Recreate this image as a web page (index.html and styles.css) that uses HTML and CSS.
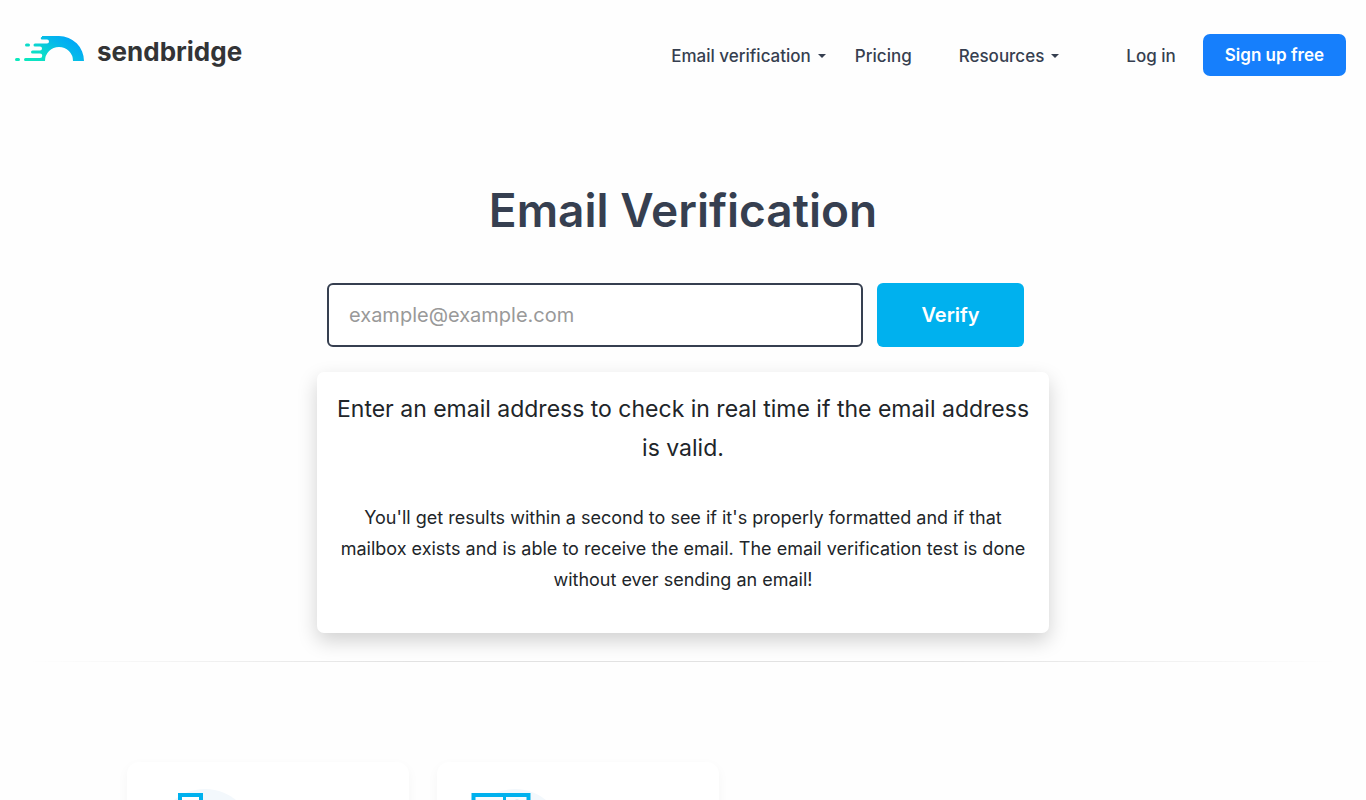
FILE: index.html
```
<!DOCTYPE html>
<html lang="en">
<head>
    <meta charset="UTF-8">
    <meta name="viewport" content="width=device-width, initial-scale=1.0">
    <title>Email Verification - Sendbridge</title>
    <link rel="stylesheet" href="styles.css">
</head>
<body>
    <header class="header">
        <a href="#" class="logo">
            <svg class="logo-mark" width="70" height="28" viewBox="0 0 70 28" aria-hidden="true">
                <defs>
                    <linearGradient id="bridge" x1="0" y1="1" x2="1" y2="0.4">
                        <stop offset="0" stop-color="#0be8bd"/>
                        <stop offset="0.35" stop-color="#0cdcca"/>
                        <stop offset="0.7" stop-color="#05b9ea"/>
                        <stop offset="1" stop-color="#00a6f8"/>
                    </linearGradient>
                </defs>
                <path fill="url(#bridge)" d="M27 1H44A25 25 0 0 1 69 26H58A14 14 0 0 0 30 26H10.500a1.500 1.500 0 0 1 0-3H25a2.200 2.200 0 0 0 0-4.500H17.500a1.500 1.500 0 0 1 0-3H25a2 2 0 0 0 0-4H20a1.500 1.500 0 0 1 0-3H32a2 2 0 0 0 0-4H27a1.200 1.200 0 0 1 0-2.500Z"/>
                <rect x="10" y="8.500" width="5" height="3" rx="1.500" fill="#0cdcca"/>
                <rect x="0" y="23" width="5" height="3" rx="1.500" fill="#0be8bd"/>
            </svg>
            <span class="logo-text">sendbridge</span>
        </a>
        <nav class="nav">
            <a href="#" class="nav-link dropdown">Email verification</a>
            <a href="#" class="nav-link pricing">Pricing</a>
            <a href="#" class="nav-link dropdown">Resources</a>
            <a href="#" class="nav-link login">Log in</a>
            <a href="#" class="signup">Sign up free</a>
        </nav>
    </header>

    <main>
        <section class="hero">
            <h1>Email Verification</h1>
            <form class="verify-form">
                <input type="email" class="email-input" placeholder="example@example.com" aria-label="Email address">
                <button type="submit" class="verify-btn">Verify</button>
            </form>
            <div class="info">
                <p class="lead">Enter an email address to check in real time if the email address is valid.</p>
                <p class="details">You'll get results within a second to see if it's properly formatted and if that mailbox exists and is able to receive the email. The email verification test is done without ever sending an email!</p>
            </div>
        </section>

        <hr class="divider">

        <section class="features">
            <div class="card">
                <svg width="98" height="98" viewBox="0 0 98 98" aria-hidden="true">
                    <circle cx="49" cy="49" r="49" fill="#f3f8fc"/>
                    <rect x="24" y="6" width="21" height="70" fill="#fff" stroke="#00b1ee" stroke-width="4"/>
                </svg>
            </div>
            <div class="card">
                <svg width="98" height="98" viewBox="0 0 98 98" aria-hidden="true">
                    <circle cx="49" cy="49" r="49" fill="#f3f8fc"/>
                    <rect x="7.500" y="6" width="55" height="70" fill="#f8fbfd" stroke="#00b1ee" stroke-width="4"/>
                    <path d="M38.500 6V76" stroke="#00b1ee" stroke-width="3"/>
                    <circle cx="51" cy="12" r="2" fill="#dcebf3"/>
                </svg>
            </div>
        </section>
    </main>
</body>
</html>
```
FILE: styles.css
```
* {
    box-sizing: border-box;
}

body {
    margin: 0;
    font-family: Inter, "Open Sans", sans-serif;
    color: #212529;
    background: #fefefe;
}

a {
    text-decoration: none;
}

.header {
    display: flex;
    justify-content: space-between;
    align-items: flex-start;
    padding: 34px 20px 0 15px;
}

.logo {
    display: flex;
    align-items: flex-start;
    gap: 12px;
}

.logo-mark {
    margin-top: 1px;
}

.logo-text {
    font-size: 26px;
    line-height: 36px;
    font-weight: 700;
    color: #333436;
}

.nav {
    display: flex;
    align-items: center;
}

.nav-link {
    padding-top: 2px;
    font-size: 17px;
    line-height: 28px;
    font-weight: 500;
    color: #363f50;
}

.dropdown {
    display: flex;
    align-items: center;
    gap: 7px;
}

.dropdown::after {
    content: "";
    border: 4px solid transparent;
    border-top-color: #363f50;
    border-bottom: 0;
}

.pricing {
    margin: 0 47px 0 29px;
}

.login {
    margin: 0 27px 0 67px;
}

.signup {
    padding: 7px 22px;
    border-radius: 7px;
    font-size: 17px;
    line-height: 28px;
    font-weight: 600;
    color: #fff;
    background: #167ffc;
}

.hero {
    width: 100%;
    max-width: 732px;
    margin: 0 auto;
    padding-top: 104px;
}

h1 {
    margin: 0;
    text-align: center;
    font-size: 46px;
    line-height: 60px;
    font-weight: 600;
    color: #363f50;
}

.verify-form {
    display: flex;
    gap: 14px;
    padding: 43px 25px 25px 10px;
}

.email-input {
    flex: 1;
    min-width: 0;
    height: 64px;
    padding: 0 20px;
    border: 2px solid #363f50;
    border-radius: 6px;
    font-family: inherit;
    font-size: 20px;
    background: #fff;
}

.email-input::placeholder {
    color: #999;
}

.verify-btn {
    width: 147px;
    border: 0;
    border-radius: 6px;
    font-family: inherit;
    font-size: 20px;
    font-weight: 600;
    color: #fff;
    background: #00b1ee;
    cursor: pointer;
}

.info {
    padding: 18px 16px 38px;
    border-radius: 7px;
    text-align: center;
    background: #fff;
    box-shadow: 0 8px 20px rgba(0, 0, 0, 0.18);
}

.lead {
    margin: 0 0 34px;
    font-size: 23px;
    line-height: 39px;
}

.details {
    margin: 0;
    font-size: 18px;
    line-height: 31px;
}

.divider {
    height: 1px;
    margin: 28px 0 100px;
    border: 0;
    background: linear-gradient(90deg, transparent 2%, #e2e2e2 30%, #e2e2e2 70%, transparent 98%);
}

.features {
    display: grid;
    grid-template-columns: repeat(auto-fill, 282px);
    gap: 28px;
    max-width: 1112px;
    margin: 0 auto;
}

.card {
    padding: 27px 29px;
    border-radius: 12px;
    background: #fff;
    box-shadow: 0 4px 12px rgba(0, 0, 0, 0.04);
}
```
